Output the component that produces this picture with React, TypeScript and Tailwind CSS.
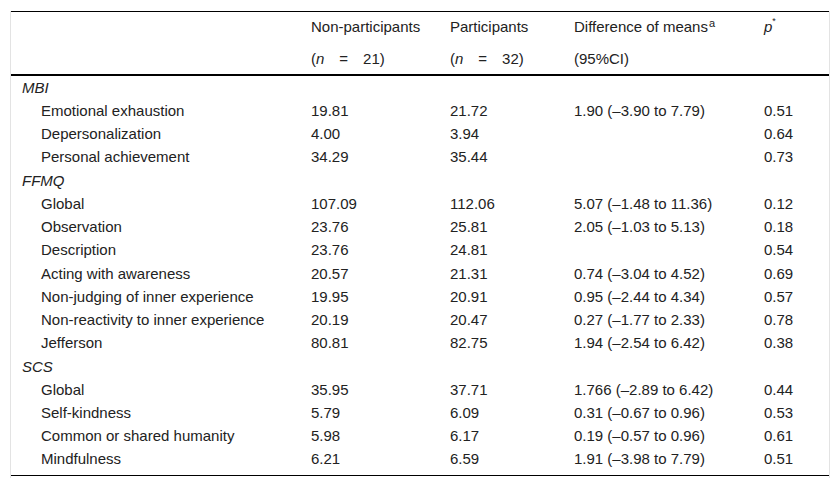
import React from "react";

type Row = {
  label: string;
  group?: boolean;
  non?: string;
  par?: string;
  diff?: string;
  p?: string;
};

const rows: Row[] = [
  { label: "MBI", group: true },
  { label: "Emotional exhaustion", non: "19.81", par: "21.72", diff: "1.90 (–3.90 to 7.79)", p: "0.51" },
  { label: "Depersonalization", non: "4.00", par: "3.94", diff: "", p: "0.64" },
  { label: "Personal achievement", non: "34.29", par: "35.44", diff: "", p: "0.73" },
  { label: "FFMQ", group: true },
  { label: "Global", non: "107.09", par: "112.06", diff: "5.07 (–1.48 to 11.36)", p: "0.12" },
  { label: "Observation", non: "23.76", par: "25.81", diff: "2.05 (–1.03 to 5.13)", p: "0.18" },
  { label: "Description", non: "23.76", par: "24.81", diff: "", p: "0.54" },
  { label: "Acting with awareness", non: "20.57", par: "21.31", diff: "0.74 (–3.04 to 4.52)", p: "0.69" },
  { label: "Non-judging of inner experience", non: "19.95", par: "20.91", diff: "0.95 (–2.44 to 4.34)", p: "0.57" },
  { label: "Non-reactivity to inner experience", non: "20.19", par: "20.47", diff: "0.27 (–1.77 to 2.33)", p: "0.78" },
  { label: "Jefferson", non: "80.81", par: "82.75", diff: "1.94 (–2.54 to 6.42)", p: "0.38" },
  { label: "SCS", group: true },
  { label: "Global", non: "35.95", par: "37.71", diff: "1.766 (–2.89 to 6.42)", p: "0.44" },
  { label: "Self-kindness", non: "5.79", par: "6.09", diff: "0.31 (–0.67 to 0.96)", p: "0.53" },
  { label: "Common or shared humanity", non: "5.98", par: "6.17", diff: "0.19 (–0.57 to 0.96)", p: "0.61" },
  { label: "Mindfulness", non: "6.21", par: "6.59", diff: "1.91 (–3.98 to 7.79)", p: "0.51" },
];

const cell = "p-0 pl-[11px] text-left align-middle font-normal whitespace-nowrap leading-[18px]";

export default function App() {
  return (
    <div
      className="w-[840px] h-[488px] bg-white pt-[11px] pl-[10px] text-[15px] text-[#222]"
      style={{ fontFamily: '"Liberation Sans", Arial, sans-serif' }}
    >
      <div className="w-[820px] border-x border-[#e3e3e3] pb-[2px]">
        <table className="w-[818px] border-collapse table-fixed">
          <colgroup>
            <col className="w-[289px]" />
            <col className="w-[139px]" />
            <col className="w-[124px]" />
            <col className="w-[190px]" />
            <col className="w-[76px]" />
          </colgroup>
          <thead>
            <tr className="h-[31px] border-t border-black">
              <th className={cell}></th>
              <th className={cell}>Non-participants</th>
              <th className={cell}>Participants</th>
              <th className={cell}>
                Difference of means<sup className="text-[11px] ml-[1px]">a</sup>
              </th>
              <th className={cell}>
                <i>p</i>
                <sup className="text-[9px] -top-[0.9em]">*</sup>
              </th>
            </tr>
            <tr className="h-[32px] border-b-2 border-black">
              <th className={`${cell} pt-[2px]`}></th>
              <th className={`${cell} pt-[2px]`}>
                (<i>n</i>&emsp;=&emsp;21)
              </th>
              <th className={`${cell} pt-[2px]`}>
                (<i>n</i>&emsp;=&emsp;32)
              </th>
              <th className={`${cell} pt-[2px]`}>(95%CI)</th>
              <th className={`${cell} pt-[2px]`}></th>
            </tr>
          </thead>
          <tbody className="border-b border-black">
            {rows.map((r, i) => {
              const last = i === rows.length - 1;
              const c = `${cell} pt-[3px] ${last ? "pb-[6px]" : ""}`;
              return r.group ? (
                <tr key={i} className="h-[23.25px]">
                  <td className={`${cell} pt-[3px]`} colSpan={5}>
                    <i>{r.label}</i>
                  </td>
                </tr>
              ) : (
                <tr key={i} className={last ? "h-[29.25px]" : "h-[23.25px]"}>
                  <td className={`${c} pl-[30px]`}>{r.label}</td>
                  <td className={c}>{r.non}</td>
                  <td className={c}>{r.par}</td>
                  <td className={c}>{r.diff}</td>
                  <td className={c}>{r.p}</td>
                </tr>
              );
            })}
          </tbody>
        </table>
      </div>
    </div>
  );
}
